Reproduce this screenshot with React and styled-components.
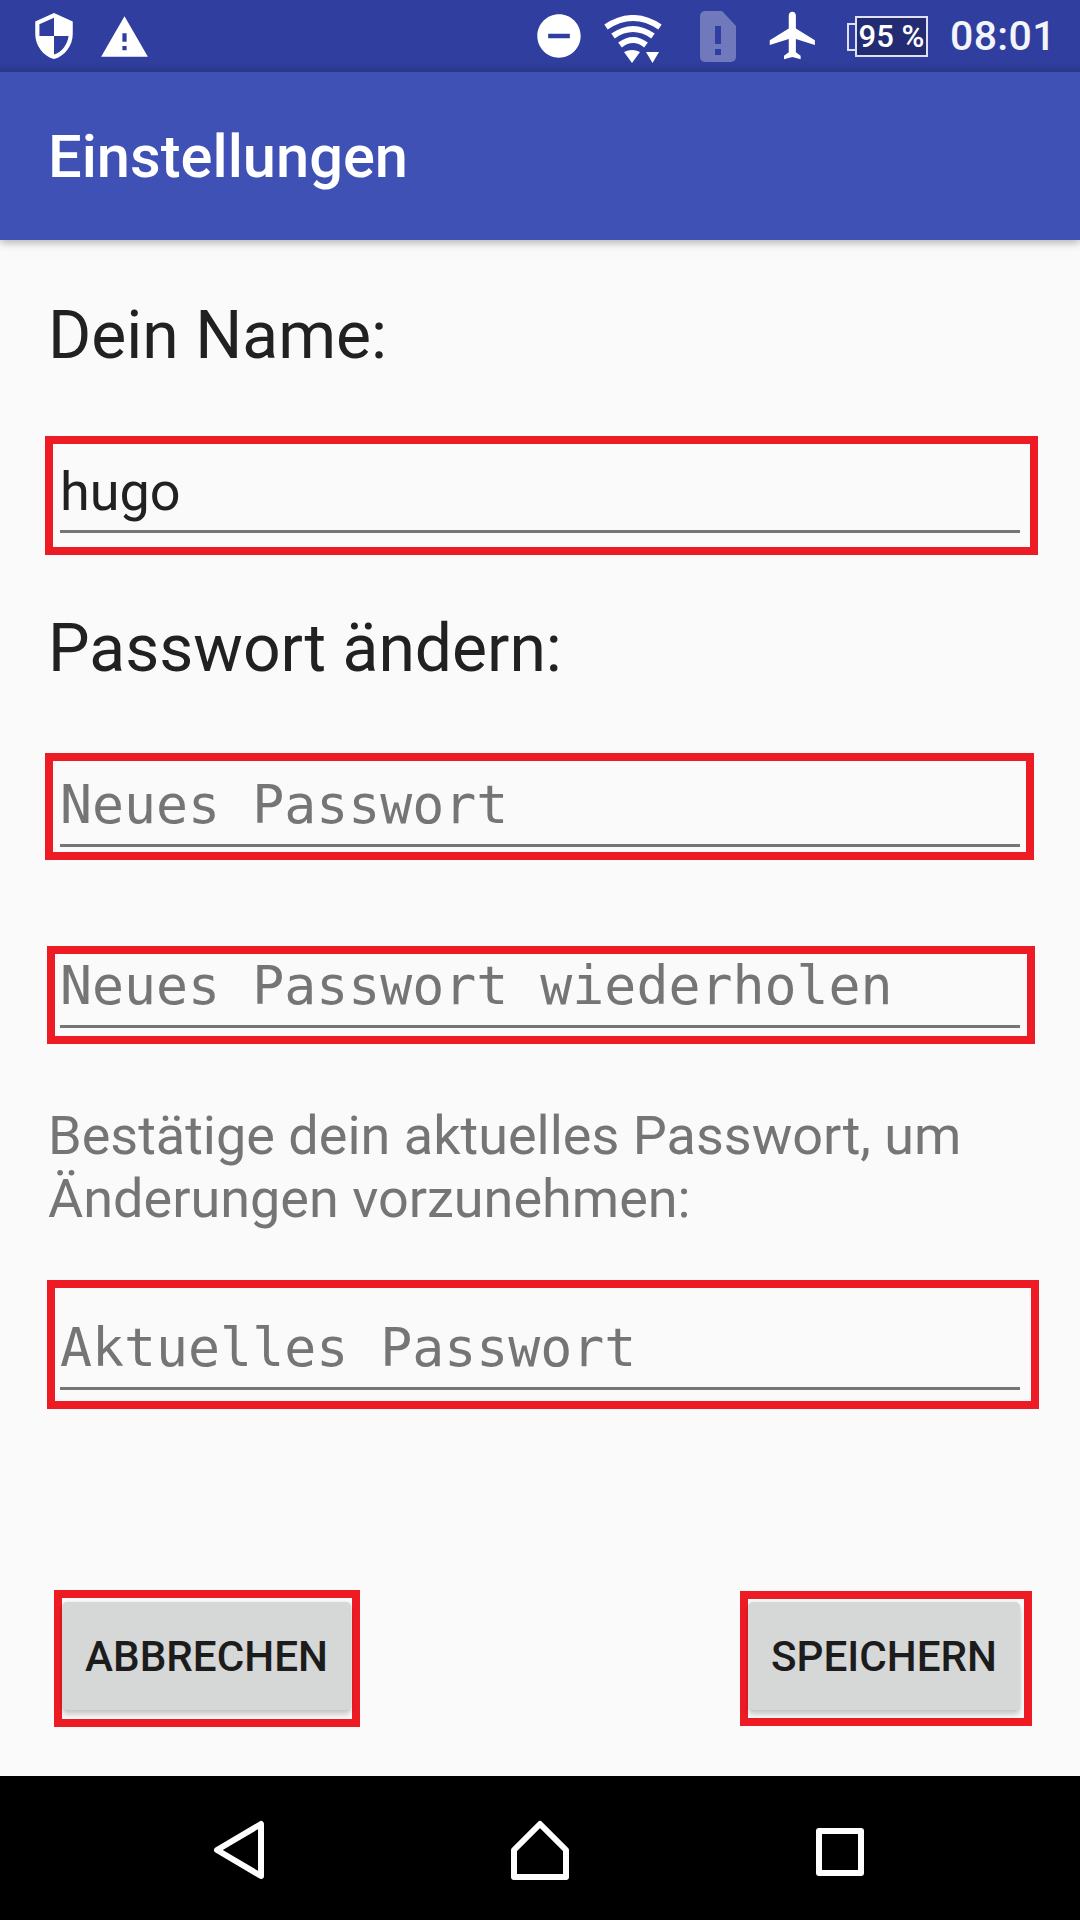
import React from "react";
import styled, { createGlobalStyle } from "styled-components";

const Global = createGlobalStyle`
  html, body { margin: 0; padding: 0; background: #fafafa; }
  #root { width: 1080px; height: 1920px; }
  * { box-sizing: border-box; }
`;
const Page = styled.div`
  width: 1080px; height: 1920px; display: flex; flex-direction: column;
  background: #fafafa; font-family: Roboto, sans-serif; overflow: hidden;
`;
const StatusBar = styled.div`
  height: 72px; flex: none; display: flex; align-items: flex-start; position: relative;
  background: linear-gradient(#303f9f 0, #303f9f 60px, #2c3a90 72px);
  color: #fff;
`;
const StatusLeft = styled.div`
  display: flex; align-items: center; height: 72px; padding-left: 29px; gap: 20px;
`;
const StatusRight = styled.div`
  display: flex; align-items: center; margin-left: auto; height: 72px; padding-right: 24px;
`;
const Glyph = styled.svg`
  display: block; flex: none; margin-left: ${p => p.$ml || 0}px; margin-top: ${p => p.$mt || 0}px;
`;
const Battery = styled.div`
  display: flex; align-items: center; margin-left: 25px; margin-top: 1px;
`;
const BatteryNub = styled.div`
  width: 8px; height: 28px; border: 2px solid #dfe1f0; border-right: none;
`;
const BatteryBody = styled.div`
  width: 73px; height: 41px; border: 2px solid #dfe1f0; background: #232c72;
  display: flex; align-items: center; justify-content: center;
  font: 500 31px/1 Roboto, sans-serif; color: #fff; white-space: pre;
`;
const Clock = styled.div`
  font: 500 41px/1 Roboto, sans-serif; letter-spacing: 0.4px; margin-left: 22px; color: #f4f5fb;
`;
const Toolbar = styled.div`
  height: 168px; flex: none; background: #3f51b5; display: flex; align-items: center;
  padding-left: 48px; box-shadow: 0 3px 8px rgba(0,0,0,.28); position: relative; z-index: 1;
`;
const Title = styled.div`
  font: 500 59.6px/1 Roboto, sans-serif; color: #fff; padding-top: 4px;
`;
const Content = styled.div`
  flex: 1; display: flex; flex-direction: column; position: relative;
`;
const Heading = styled.div`
  font: 400 66px/70px Roboto, sans-serif; color: #212121; padding-left: 48px; margin-top: ${p => p.$mt}px;
`;
const Field = styled.div`
  margin-left: ${p => p.$left}px; width: ${p => p.$width}px; height: ${p => p.$height}px;
  margin-top: ${p => p.$mt}px; border: 8px solid #ed1c24; flex: none;
  display: flex; align-items: flex-end; padding-bottom: ${p => p.$pad}px;
  padding-left: ${p => 60 - p.$left - 8}px;
`;
const Input = styled.input`
  width: 960px; height: 70px; flex: none; background: none; border: none; outline: none;
  border-bottom: 3px solid #757575; padding: 0 0 11px; margin: 0;
  font: 400 ${p => p.$mono ? 53.2 : 54}px/60px ${p => p.$mono ? '"DejaVu Sans Mono", monospace' : 'Roboto, sans-serif'};
  color: #212121;
  &::placeholder { color: #757575; opacity: 1; }
`;
const Hint = styled.div`
  font: 400 54px/63px Roboto, sans-serif; color: #757575; padding-left: 48px; margin-top: 60px;
`;
const Actions = styled.div`
  margin-top: auto; margin-bottom: 49px; display: flex; align-items: flex-start;
`;
const ButtonFrame = styled.div`
  margin-left: ${p => p.$left}px; width: ${p => p.$width}px; height: ${p => p.$height}px;
  margin-top: ${p => p.$mt}px; border: 8px solid #ed1c24; flex: none; padding: ${p => p.$pt}px 0 0;
`;
const Button = styled.button`
  display: flex; align-items: center; justify-content: center;
  width: ${p => p.$width}px; height: 108px; border: none; border-radius: 5px; padding: 3px 0 0; margin: 0;
  background: #d6d7d7; box-shadow: 0 5px 5px rgba(0,0,0,.18), 0 0 3px rgba(0,0,0,.1);
  font: 500 42.2px/1 Roboto, sans-serif; color: #1c1c1c;
`;
const NavBar = styled.div`
  height: 144px; flex: none; background: #000; display: grid;
  grid-template-columns: repeat(3, 300px); padding: 8px 0 0 90px; align-items: center; justify-items: center;
`;

export default function App() {
  return (
    <Page>
      <Global />
      <StatusBar>
        <StatusLeft>
          <Glyph width="50" height="50" viewBox="0 0 24 24" fill="#fff">
            <path d="M12 1L3 5v6c0 5.55 3.84 10.74 9 12 5.16-1.26 9-6.45 9-12V5l-9-4zm0 10.99h7c-.53 4.12-3.28 7.79-7 8.94V12H5V6.3l7-3.11v8.8z" />
          </Glyph>
          <Glyph width="51" height="51" viewBox="0 0 24 24" fill="#fff" $mt="2">
            <path d="M1 21h22L12 2 1 21zm12-3h-2v-2h2v2zm0-4h-2v-4h2v4z" />
          </Glyph>
        </StatusLeft>
        <StatusRight>
          <Glyph width="52" height="52" viewBox="0 0 24 24" fill="#fff">
            <path d="M12 2C6.48 2 2 6.48 2 12s4.48 10 10 10 10-4.48 10-10S17.52 2 12 2zm5 11H7v-2h10v2z" />
          </Glyph>
          <Glyph width="60" height="48" viewBox="0 0 60 48" $ml="18" $mt="6">
            <g fill="none" stroke="#fff" strokeWidth="6">
              <path d="M3 12Q30 -6 57 12" />
              <path d="M10 21Q30 7 50 21" />
              <path d="M17 30Q30 20 43 30" />
            </g>
            <path d="M21 37Q29 33 37 37L29 48z" fill="#fff" />
            <path d="M43 37H56L49.5 48z" fill="#fff" />
          </Glyph>
          <Glyph width="36" height="51" viewBox="0 0 36 51" $ml="37">
            <path d="M5 0H22L36 15V46a5 5 0 0 1-5 5H5a5 5 0 0 1-5-5V5a5 5 0 0 1 5-5z" fill="#7179bd" />
            <path d="M15 15H21V33H15zM15 38H21V44H15z" fill="#303f9f" />
          </Glyph>
          <Glyph width="57" height="57" viewBox="0 0 24 24" fill="#fff" $ml="29" $mt="-1">
            <path d="M21 16v-2l-8-5V3.5c0-.83-.67-1.5-1.5-1.5S10 2.67 10 3.5V9l-8 5v2l8-2.5V19l-2 1.5V22l3.5-1 3.5 1v-1.5L13 19v-5.5l8 2.5z" />
          </Glyph>
          <Battery>
            <BatteryNub />
            <BatteryBody>95 %</BatteryBody>
          </Battery>
          <Clock>08:01</Clock>
        </StatusRight>
      </StatusBar>
      <Toolbar>
        <Title>Einstellungen</Title>
      </Toolbar>
      <Content>
        <Heading $mt="61">Dein Name:</Heading>
        <Field $left={45} $width={993} $height={119} $mt={65} $pad={14}>
          <Input defaultValue="hugo" readOnly />
        </Field>
        <Heading $mt="59">Passwort ändern:</Heading>
        <Field $left={45} $width={989} $height={107} $mt={69} $pad={5}>
          <Input $mono placeholder="Neues Passwort" readOnly />
        </Field>
        <Field $left={47} $width={988} $height={98} $mt={86} $pad={8}>
          <Input $mono placeholder="Neues Passwort wiederholen" readOnly />
        </Field>
        <Hint>Bestätige dein aktuelles Passwort, um<br />Änderungen vorzunehmen:</Hint>
        <Field $left={47} $width={992} $height={129} $mt={50} $pad={11}>
          <Input $mono placeholder="Aktuelles Passwort" readOnly />
        </Field>
        <Actions>
          <ButtonFrame $left={54} $width={306} $height={137} $mt={0} $pt={4}>
            <Button $width={289}>ABBRECHEN</Button>
          </ButtonFrame>
          <ButtonFrame $left={380} $width={292} $height={135} $mt={1} $pt={3}>
            <Button $width={272}>SPEICHERN</Button>
          </ButtonFrame>
        </Actions>
      </Content>
      <NavBar>
        <Glyph width="58" height="62" viewBox="0 0 58 62" fill="none" stroke="#fff" strokeWidth="6" strokeLinejoin="round" $mt="-4">
          <path d="M50 5V57L6 31z" />
        </Glyph>
        <Glyph width="62" height="62" viewBox="0 0 62 62" fill="none" stroke="#fff" strokeWidth="6" strokeLinejoin="round" $mt="-3">
          <path d="M31 4L5 30V57H57V30z" />
        </Glyph>
        <Glyph width="50" height="50" viewBox="0 0 50 50" fill="none" stroke="#fff" strokeWidth="6" strokeLinejoin="round">
          <path d="M4 4H46V46H4z" />
        </Glyph>
      </NavBar>
    </Page>
  );
}
